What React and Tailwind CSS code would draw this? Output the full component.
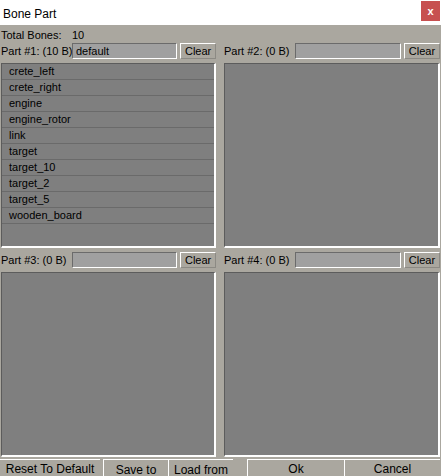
import React from 'react';

const bones = [
  'crete_left',
  'crete_right',
  'engine',
  'engine_rotor',
  'link',
  'target',
  'target_10',
  'target_2',
  'target_5',
  'wooden_board',
];

function PartHeader({ label, value }) {
  return (
    <div className="flex items-center h-[16px]">
      <span className="w-[71px] shrink-0 whitespace-nowrap leading-[16px]">{label}</span>
      <div className="w-[106px] h-[16px] bg-[#a0a0a0] border-t border-l border-[#6b6b6b] border-b-white border-r-white border-b border-r leading-[14px] pl-[3px]">
        {value}
      </div>
      <button className="ml-[3px] w-[36px] h-[16px] border-t border-l border-white border-b border-r border-b-[#8c8a84] border-r-[#8c8a84] leading-[14px] text-center">
        Clear
      </button>
    </div>
  );
}

function Panel({ items = [] }) {
  return (
    <div className="mt-[4px] h-[185px] bg-[#7f7f7f] border-t border-l border-[#5c5c5c] border-b-2 border-r-2 border-b-white border-r-white overflow-hidden">
      {items.map((b) => (
        <div key={b} className="h-[16px] border-b border-[#6a6a6a] pl-[7px] leading-[15px]">
          {b}
        </div>
      ))}
    </div>
  );
}

export default function App() {
  return (
    <div
      className="w-[441px] h-[476px] flex flex-col text-[11px] text-black overflow-hidden"
      style={{ fontFamily: '"Liberation Sans", Arial, sans-serif' }}
    >
      <div className="h-[25px] bg-white flex items-start justify-between shrink-0">
        <span className="text-[12px] pl-[3px] pt-[5px]">Bone Part</span>
        <div className="mt-[1px] mr-[1px] w-[19px] h-[20px] bg-[#c75050] flex items-center justify-center text-white text-[11px] font-bold leading-none">
          x
        </div>
      </div>

      <div className="flex-1 bg-[#aaa79f] flex flex-col">
        <div className="h-[18px] pl-[1px] pt-[3px] flex leading-[14px]">
          <span className="w-[71px]">Total Bones:</span>
          <span>10</span>
        </div>

        <div className="grid grid-cols-[215px_216px] gap-x-[8px] pl-[1px]">
          <div>
            <PartHeader label="Part #1: (10 B)" value="default" />
            <Panel items={bones} />
          </div>
          <div>
            <PartHeader label="Part #2: (0 B)" value="" />
            <Panel />
          </div>
          <div className="mt-[4px]">
            <PartHeader label="Part #3: (0 B)" value="" />
            <Panel />
          </div>
          <div className="mt-[4px]">
            <PartHeader label="Part #4: (0 B)" value="" />
            <Panel />
          </div>
        </div>

        <div className="mt-[2px] flex text-[12px] h-[19px]">
          <button className="w-[100px] border-t border-white text-center leading-[17px]">
            Reset To Default
          </button>
          <button className="ml-[3px] w-[65px] border-t border-l border-white text-center leading-[19px] pt-[1px]">
            Save to
          </button>
          <button className="w-[65px] border-t border-l border-white text-center leading-[19px] pt-[1px]">
            Load from
          </button>
          <button className="ml-[14px] w-[97px] border-t border-l border-white text-center leading-[17px]">
            Ok
          </button>
          <button className="w-[96px] border-t border-l border-white text-center leading-[17px]">
            Cancel
          </button>
        </div>
      </div>
    </div>
  );
}
